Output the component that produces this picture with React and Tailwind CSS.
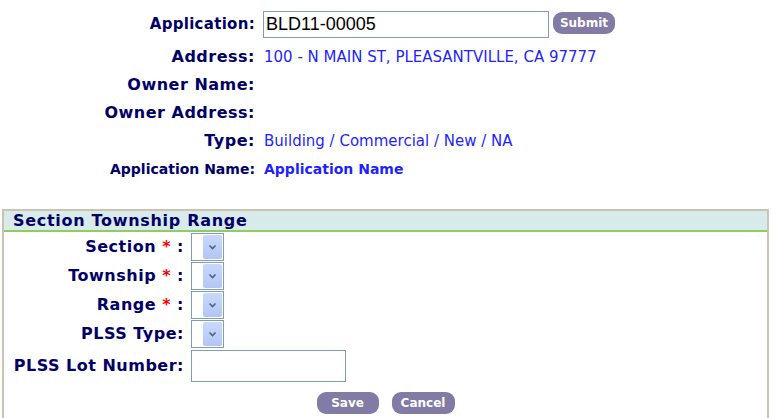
import { useState } from 'react';

const verdana = "font-['DejaVu_Sans','Noto_Sans',sans-serif]";

const FakeSelect = () => (
  <div className="relative w-[33px] h-[28px] border border-[#7f9db9] bg-white">
    <div className="absolute right-[1px] top-[1px] bottom-[1px] w-[19px] rounded-[2px] bg-gradient-to-b from-[#c9d8fc] to-[#b2c6f5] flex items-center justify-center">
      <svg width="9" height="6" viewBox="0 0 9 6">
        <path d="M1.5 1.5 L4.5 4.5 L7.5 1.5" fill="none" stroke="#4d6185" strokeWidth="1.6" />
      </svg>
    </div>
  </div>
);

const PillButton = ({ children, className = '' }) => (
  <button
    className={`h-[22px] rounded-[9px] bg-[#827ba5] text-white font-bold text-[12px] ${verdana} ${className}`}
  >
    {children}
  </button>
);

const InfoRow = ({ label, children, small }) => (
  <div className="flex items-center h-[28px]">
    <div
      className={`w-[255px] shrink-0 text-right font-bold text-[#000066] ${verdana} ${
        small ? 'text-[14px]' : 'text-[16px] tracking-[0.5px]'
      }`}
    >
      {label}
    </div>
    <div className={`pl-[9px] text-[15px] text-[#1f1fff] ${verdana}`}>{children}</div>
  </div>
);

const FormRow = ({ label, required, children, className = '' }) => (
  <div className={`flex items-center ${className}`}>
    <div className={`w-[180px] shrink-0 text-right font-bold text-[16px] tracking-[0.5px] text-[#000066] ${verdana}`}>
      {label}
      {required && <span className="text-[#ff0000]"> *</span>}
      {required ? ' :' : ':'}
    </div>
    <div className="pl-[7px]">{children}</div>
  </div>
);

export default function App() {
  const [app, setApp] = useState('BLD11-00005');
  const [lot, setLot] = useState('');

  return (
    <div className="w-[771px] h-[418px] bg-white overflow-hidden">
      <div className="pt-[10px]">
        <div className="flex items-center h-[28px] mb-[5px]">
          <div className={`w-[255px] shrink-0 text-right font-bold text-[15px] tracking-[0.3px] text-[#000066] ${verdana}`}>
            Application:
          </div>
          <div className="pl-[8px] flex items-center gap-[4px]">
            <input
              value={app}
              onChange={(e) => setApp(e.target.value)}
              className="w-[286px] h-[27px] border border-[#7f9db9] px-[2px] text-[18px] text-black font-['Liberation_Sans',Arial,sans-serif] outline-none"
            />
            <PillButton className="w-[62px] -mt-[2px]">Submit</PillButton>
          </div>
        </div>
        <InfoRow label="Address:">100 - N MAIN ST, PLEASANTVILLE, CA 97777</InfoRow>
        <InfoRow label="Owner Name:" />
        <InfoRow label="Owner Address:" />
        <InfoRow label="Type:">Building / Commercial / New / NA</InfoRow>
        <InfoRow label="Application Name:" small>
          <span className="font-bold text-[14px]">Application Name</span>
        </InfoRow>
      </div>

      <div className="mt-[26px] mx-[2px] border-2 border-b-0 border-[#cbc4b3] h-[220px]">
        <div className="h-[21px] bg-[#d8ebea] border-b-2 border-[#8fce5c] flex items-center">
          <span className={`pl-[9px] font-bold text-[16px] tracking-[0.7px] text-[#000066] ${verdana}`}>
            Section Township Range
          </span>
        </div>
        <div className="pt-[1px]">
          <FormRow label="Section" required className="mb-[1px]">
            <FakeSelect />
          </FormRow>
          <FormRow label="Township" required className="mb-[1px]">
            <FakeSelect />
          </FormRow>
          <FormRow label="Range" required className="mb-[1px]">
            <FakeSelect />
          </FormRow>
          <FormRow label="PLSS Type" className="mb-[2px]">
            <FakeSelect />
          </FormRow>
          <FormRow label="PLSS Lot Number">
            <input
              value={lot}
              onChange={(e) => setLot(e.target.value)}
              className="w-[155px] h-[32px] border border-[#7f9db9] outline-none"
            />
          </FormRow>
          <div className="flex justify-center gap-[13px] mt-[10px]">
            <PillButton className="w-[62px]">Save</PillButton>
            <PillButton className="w-[63px]">Cancel</PillButton>
          </div>
        </div>
      </div>
    </div>
  );
}
